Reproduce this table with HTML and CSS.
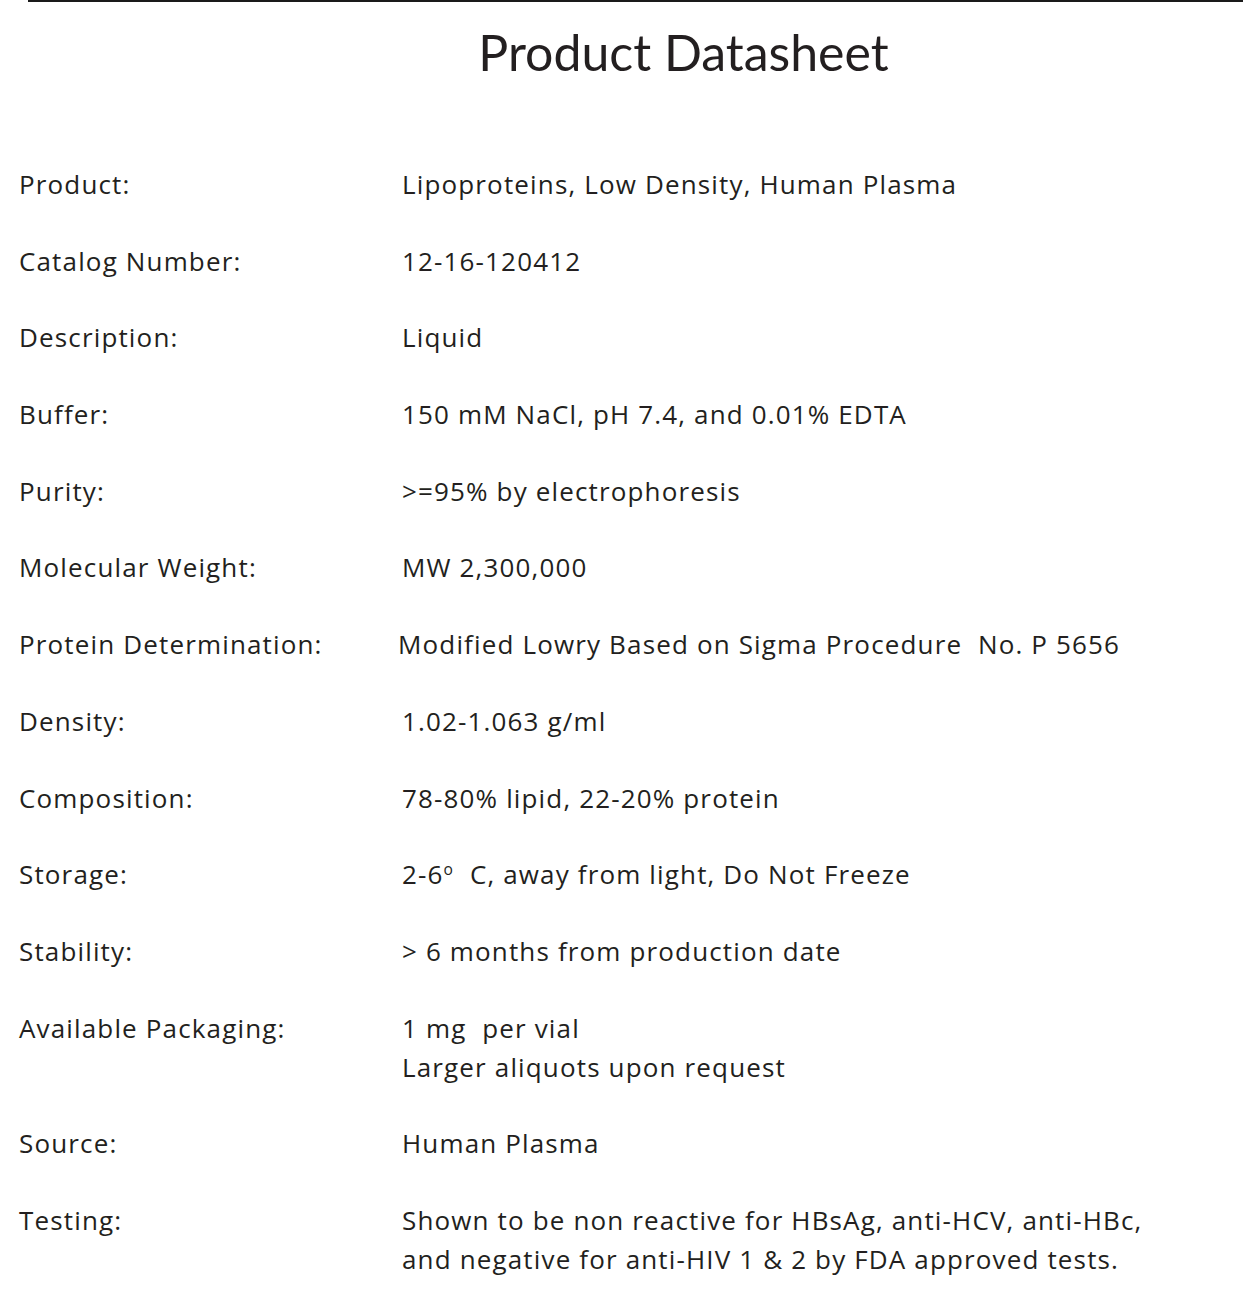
FILE: index.html
```html
<!DOCTYPE html>
<html>
<head>
<meta charset="utf-8">
<link rel="stylesheet" href="styles.css">
</head>
<body>
<div class="page">
  <div class="topline"></div>
  <h1 class="title">Product Datasheet</h1>
  <div class="sheet">
    <div class="label">Product:</div><div class="value">Lipoproteins, Low Density, Human Plasma</div>
    <div class="label">Catalog Number:</div><div class="value">12-16-120412</div>
    <div class="label">Description:</div><div class="value">Liquid</div>
    <div class="label">Buffer:</div><div class="value">150 mM NaCl, pH 7.4, and 0.01% EDTA</div>
    <div class="label">Purity:</div><div class="value">&gt;=95% by electrophoresis</div>
    <div class="label">Molecular Weight:</div><div class="value">MW 2,300,000</div>
    <div class="label">Protein Determination:</div><div class="value shift">Modified Lowry Based on Sigma Procedure&nbsp; No. P 5656</div>
    <div class="label">Density:</div><div class="value">1.02-1.063 g/ml</div>
    <div class="label">Composition:</div><div class="value">78-80% lipid, 22-20% protein</div>
    <div class="label">Storage:</div><div class="value">2-6<sup class="deg">o</sup>&nbsp; C, away from light, Do Not Freeze</div>
    <div class="label">Stability:</div><div class="value">&gt; 6 months from production date</div>
    <div class="label">Available Packaging:</div><div class="value">1 mg&nbsp; per vial<br>Larger aliquots upon request</div>
    <div class="label">Source:</div><div class="value">Human Plasma</div>
    <div class="label">Testing:</div><div class="value">Shown to be non reactive for HBsAg, anti-HCV, anti-HBc,<br>and negative for anti-HIV 1 &amp; 2 by FDA approved tests.</div>
  </div>
</div>
</body>
</html>
```
FILE: styles.css
```css
html, body {
  margin: 0;
  padding: 0;
  background: #ffffff;
}
.page {
  font-family: "Open Sans", Lato, sans-serif;
  color: #231f20;
  width: 1243px;
}
.topline {
  margin-left: 28px;
  height: 2px;
  background: #1a1a1a;
}
.title {
  margin: 0;
  padding-top: 20px;
  padding-left: 124px;
  text-align: center;
  font-family: Lato, "Open Sans", sans-serif;
  font-weight: 400;
  font-size: 50px;
  line-height: 60px;
}
.sheet {
  display: grid;
  grid-template-columns: 383px 1fr;
  row-gap: 37.7px;
  padding-left: 19px;
  padding-top: 83px;
  font-size: 26px;
  line-height: 39px;
  letter-spacing: 1.15px;
}
.value.shift {
  margin-left: -4px;
}
.deg {
  font-size: 60%;
  line-height: 0;
  vertical-align: 0.55em;
}
```
